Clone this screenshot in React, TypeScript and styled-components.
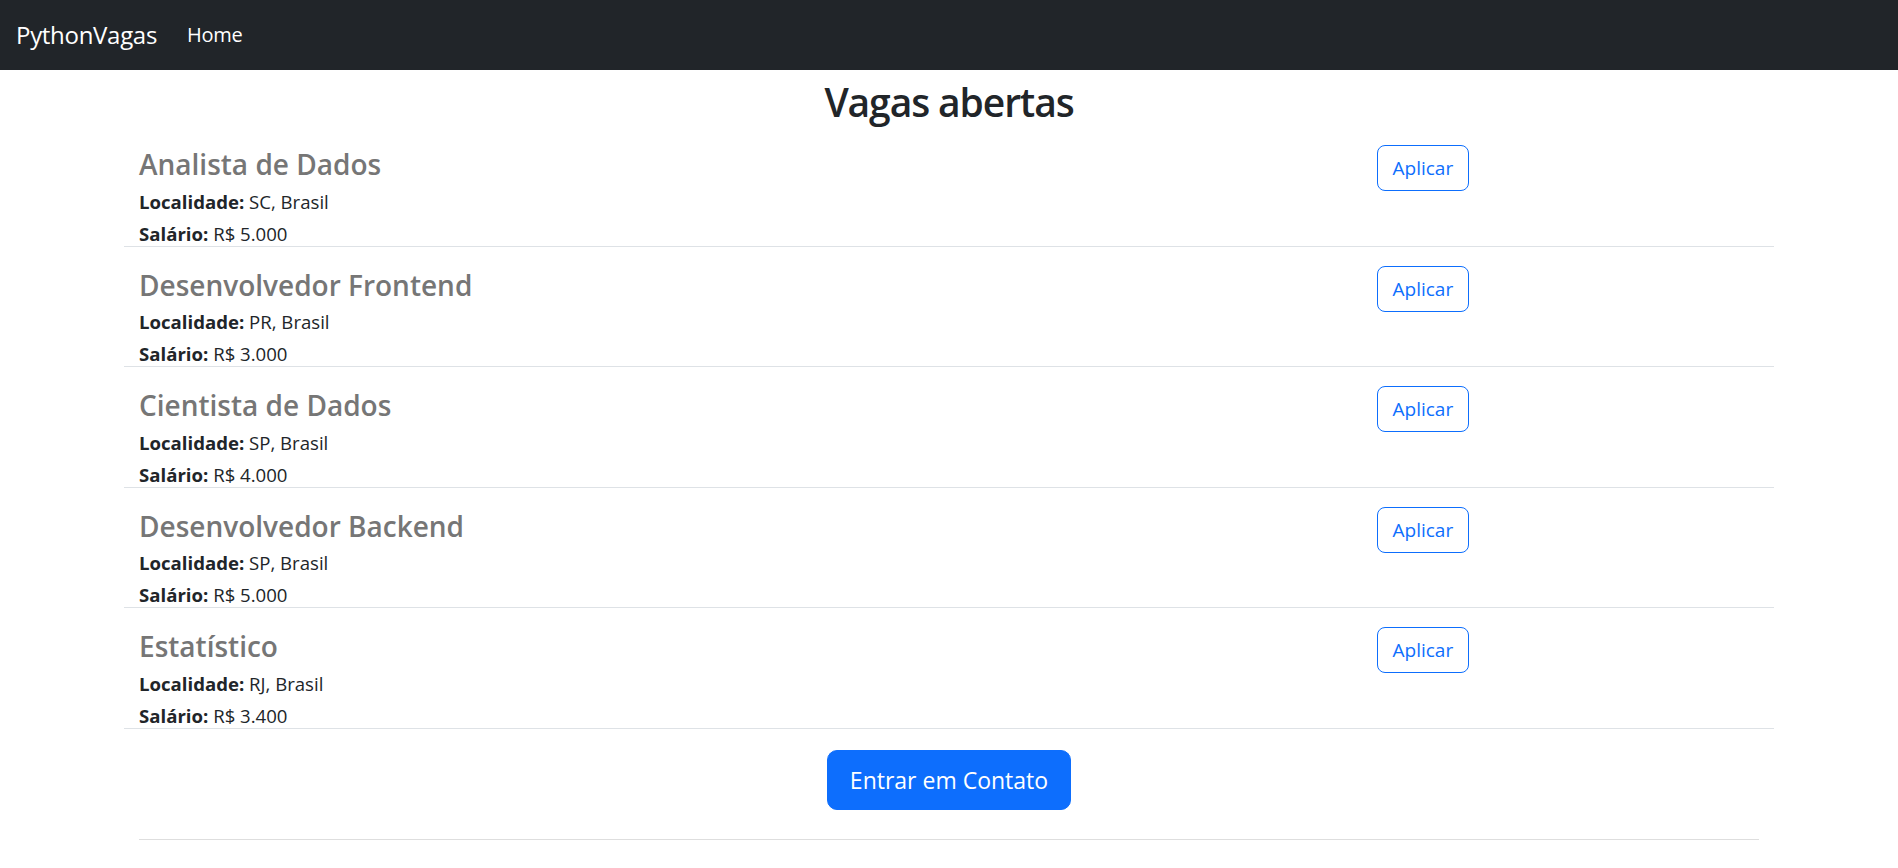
import React from "react";
import styled, { createGlobalStyle } from "styled-components";

const GlobalStyle = createGlobalStyle`
  *, *::before, *::after { box-sizing: border-box; }
  body {
    margin: 0;
    font-family: "Open Sans", "Noto Sans", sans-serif;
    font-size: 16px;
    line-height: 1.5;
    color: #212529;
    background: #fff;
  }
`;

const Navbar = styled.nav`
  height: 70px;
  background: #212529;
  display: flex;
  align-items: center;
  padding: 0 16px;
`;

const Brand = styled.a`
  font-size: 24px;
  line-height: 36px;
  color: #fff;
  text-decoration: none;
  margin-right: 30px;
  letter-spacing: -0.3px;
`;

const NavLink = styled.a`
  font-size: 20px;
  line-height: 30px;
  color: #fff;
  text-decoration: none;
  letter-spacing: -0.3px;
`;

const Main = styled.main`
  max-width: 1650px;
  margin: 0 auto;
`;

const PageTitle = styled.h1`
  margin: 8px 0 0;
  font-size: 39px;
  line-height: 48px;
  font-weight: 600;
  letter-spacing: -1.1px;
  text-align: center;
  color: #212529;
`;

const JobRow = styled.div`
  display: grid;
  grid-template-columns: 3fr 1fr;
  border-bottom: 1px solid #dee2e6;
`;

const JobInfo = styled.div`
  padding: 22px 15px 0;
`;

const JobTitle = styled.h3`
  margin: 0 0 8px;
  font-size: 28px;
  line-height: 33.6px;
  font-weight: 600;
  color: #767676;
`;

const JobLine = styled.p`
  margin: 0 0 8px;
  font-size: 18.6px;
  line-height: 24px;
  &:last-child { margin-bottom: 0; }
  strong { font-weight: 700; }
`;

const ButtonCell = styled.div`
  padding: 19px 15px 0;
`;

const ApplyButton = styled.button`
  font-family: inherit;
  font-size: 19px;
  line-height: 30px;
  padding: 7px 15px;
  color: #0d6efd;
  background: transparent;
  border: 1px solid #0d6efd;
  border-radius: 8px;
  cursor: pointer;
`;

const ContactWrap = styled.div`
  display: flex;
  justify-content: center;
  padding: 21px 0 29px;
`;

const ContactButton = styled.button`
  font-family: inherit;
  font-size: 23px;
  line-height: 36px;
  padding: 11px 22px;
  color: #fff;
  background: #0d6efd;
  border: 1px solid #0d6efd;
  border-radius: 10px;
  cursor: pointer;
`;

const FooterRule = styled.hr`
  margin: 0 15px;
  border: 0;
  border-top: 1px solid #dedede;
`;

const jobs = [
  { title: "Analista de Dados", place: "SC, Brasil", salary: "R$ 5.000" },
  { title: "Desenvolvedor Frontend", place: "PR, Brasil", salary: "R$ 3.000" },
  { title: "Cientista de Dados", place: "SP, Brasil", salary: "R$ 4.000" },
  { title: "Desenvolvedor Backend", place: "SP, Brasil", salary: "R$ 5.000" },
  { title: "Estatístico", place: "RJ, Brasil", salary: "R$ 3.400" },
];

export default function App() {
  return (
    <>
      <GlobalStyle />
      <Navbar>
        <Brand href="#">PythonVagas</Brand>
        <NavLink href="#">Home</NavLink>
      </Navbar>
      <Main>
        <PageTitle>Vagas abertas</PageTitle>
        {jobs.map((job) => (
          <JobRow key={job.title}>
            <JobInfo>
              <JobTitle>{job.title}</JobTitle>
              <JobLine>
                <strong>Localidade:</strong> {job.place}
              </JobLine>
              <JobLine>
                <strong>Salário:</strong> {job.salary}
              </JobLine>
            </JobInfo>
            <ButtonCell>
              <ApplyButton>Aplicar</ApplyButton>
            </ButtonCell>
          </JobRow>
        ))}
        <ContactWrap>
          <ContactButton>Entrar em Contato</ContactButton>
        </ContactWrap>
        <FooterRule />
      </Main>
    </>
  );
}
